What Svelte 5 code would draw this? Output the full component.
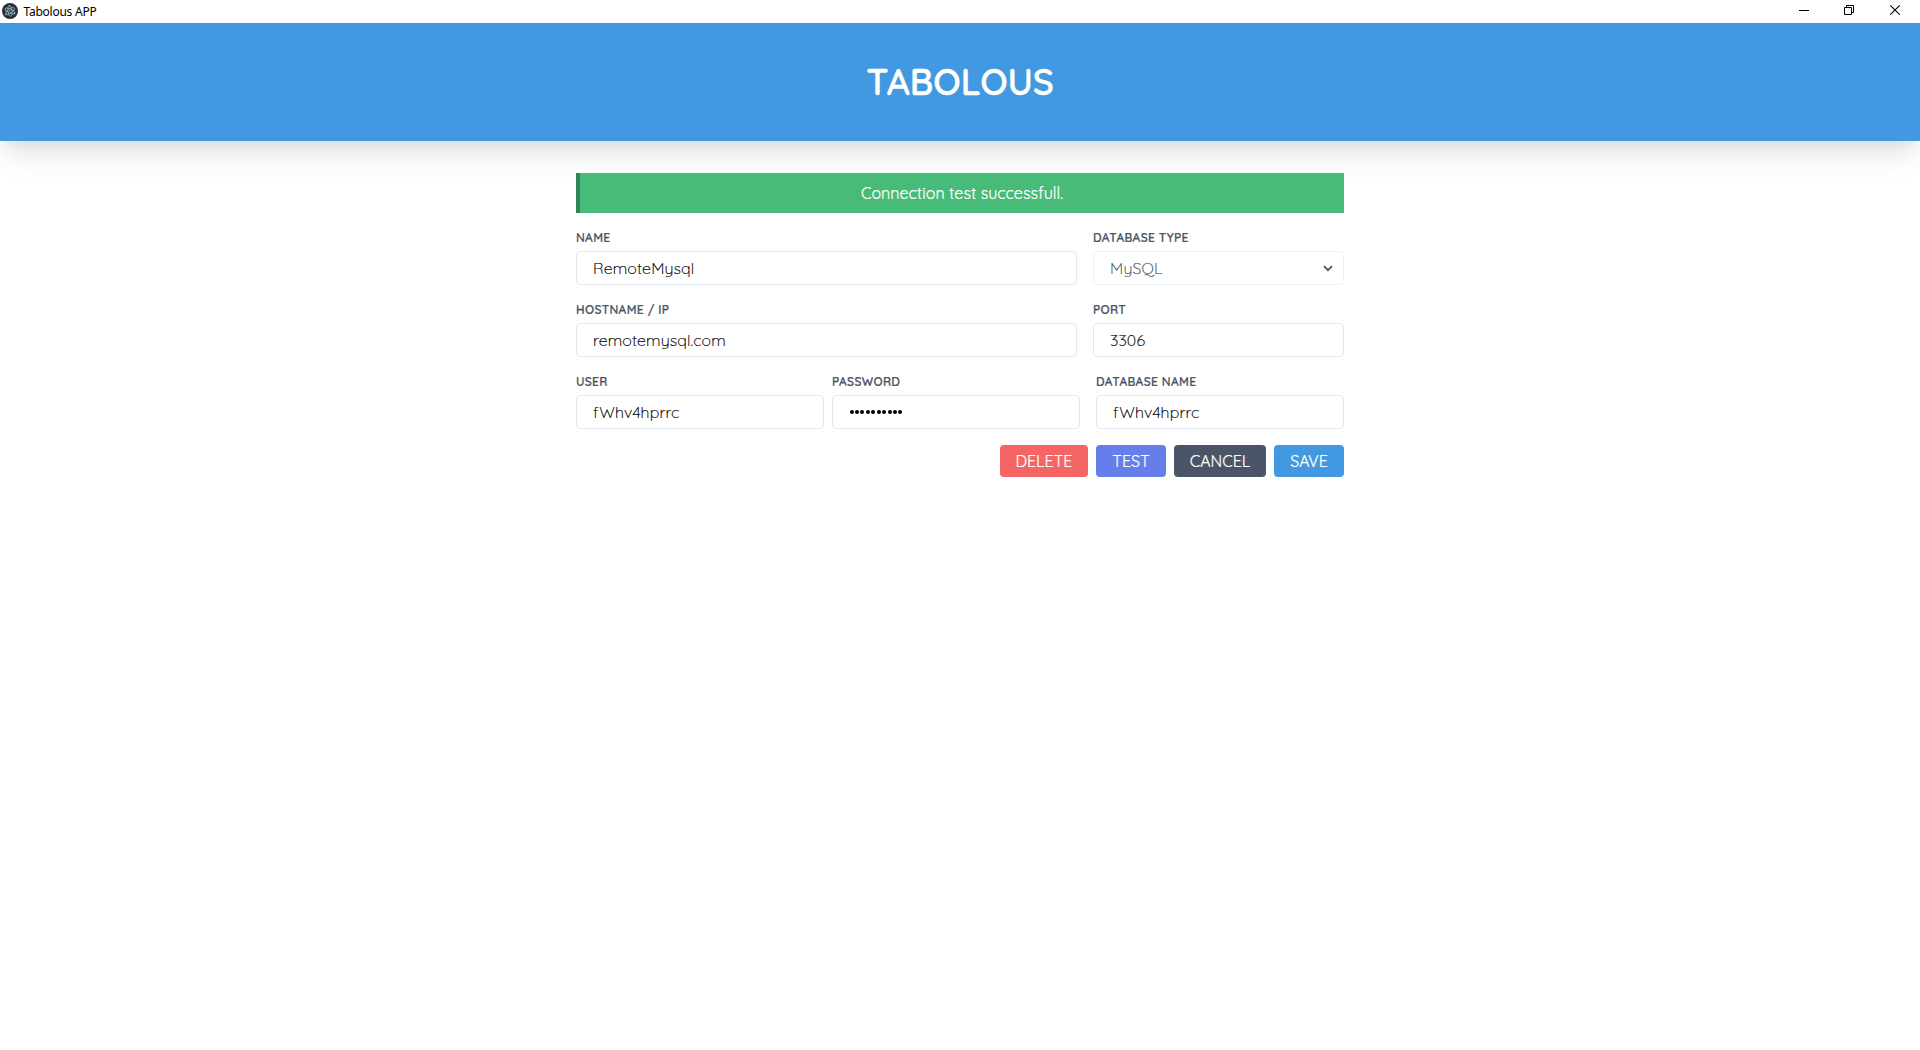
<script>
  const rows = [
    [
      { id: 'name', label: 'Name', value: 'RemoteMysql', size: 'wide' },
      { id: 'type', label: 'Database type', value: 'MySQL', size: 'narrow', select: true }
    ],
    [
      { id: 'host', label: 'Hostname / IP', value: 'remotemysql.com', size: 'wide' },
      { id: 'port', label: 'Port', value: '3306', size: 'narrow' }
    ],
    [
      { id: 'user', label: 'User', value: 'fWhv4hprrc', size: 'third' },
      { id: 'password', label: 'Password', dots: 10, size: 'third' },
      { id: 'dbname', label: 'Database name', value: 'fWhv4hprrc', size: 'third' }
    ]
  ];
  const buttons = ['Delete', 'Test', 'Cancel', 'Save'];
</script>

<div class="window">
  <div class="titlebar">
    <svg class="logo" width="16" height="16" viewBox="0 0 16 16">
      <circle cx="8" cy="8" r="8" fill="#2b2e3a" />
      <g fill="none" stroke="#8fb4bf" stroke-width=".8">
        <ellipse cx="8" cy="8" rx="5.3" ry="2.1" transform="rotate(25 8 8)" />
        <ellipse cx="8" cy="8" rx="5.3" ry="2.1" transform="rotate(85 8 8)" />
        <ellipse cx="8" cy="8" rx="5.3" ry="2.1" transform="rotate(145 8 8)" />
      </g>
      <g fill="#9fc5cf">
        <circle cx="8" cy="8" r=".7" />
        <circle cx="4.1" cy="11.5" r=".8" />
        <circle cx="12.6" cy="10.3" r=".8" />
        <circle cx="7.4" cy="2.8" r=".7" />
      </g>
    </svg>
    <span class="app-name">Tabolous APP</span>
    <div class="controls">
      <svg width="46" height="22" viewBox="0 0 46 22"><path d="M18 10.5h10" /></svg>
      <svg width="46" height="22" viewBox="0 0 46 22"><path d="M17.5 7.5h7v7h-7zM19.5 7.5v-2h7v7h-2" /></svg>
      <svg width="46" height="22" viewBox="0 0 46 22"><path class="cross" d="M17.3 5.3l9.4 9.4M26.7 5.3l-9.4 9.4" /></svg>
    </div>
  </div>

  <header><h1>TABOLOUS</h1></header>

  <main>
    <div class="alert">Connection test successfull.</div>
    {#each rows as row}
      <div class="row">
        {#each row as field}
          <div class="field {field.size} {field.id}">
            <span class="label">{field.label}</span>
            <div class="control" class:disabled={field.select}>
              {#if field.dots}
                <span class="dots">{#each Array(field.dots) as _}<i></i>{/each}</span>
              {:else}
                <span class="value">{field.value}</span>
              {/if}
              {#if field.select}
                <svg class="chevron" width="10" height="7" viewBox="0 0 10 7"><path d="M1 1.2l4 4 4-4" /></svg>
              {/if}
            </div>
          </div>
        {/each}
      </div>
    {/each}
    <div class="actions">
      {#each buttons as b}
        <button class={b.toLowerCase()}>{b}</button>
      {/each}
    </div>
  </main>
</div>

<style>
  :global(body) { background: #fff; }
  .window { min-height: 1050px; font-family: Quicksand, Lato, sans-serif; font-size: 16px; line-height: 24px; }
  .titlebar { height: 23px; display: flex; align-items: flex-start; background: #fff; }
  .logo { margin: 3px 5px 0 2px; flex: none; }
  .app-name { font: 12px/16px "Segoe UI", "Noto Sans", sans-serif; letter-spacing: -0.25px; color: #000; margin: 4px 0 0 .5px; }
  .controls { display: flex; margin-left: auto; margin-right: 1px; }
  .controls svg { display: block; fill: none; stroke: #000; stroke-width: 1; }
  .controls .cross { stroke-width: 1.1; }
  header { height: 118px; display: flex; align-items: center; justify-content: center; background: #4299e1; box-shadow: 0 20px 25px -5px rgba(0, 0, 0, .1), 0 10px 10px -5px rgba(0, 0, 0, .04); }
  h1 { margin: 0; font-size: 36px; line-height: 48px; font-weight: 600; color: #fff; -webkit-text-stroke: .4px #fff; }
  main { width: 768px; margin: 32px auto 0; }
  .alert { box-sizing: border-box; height: 40px; padding: 8px; border-left: 4px solid #2f855a; background: #48bb78; color: #fff; text-align: center; -webkit-text-stroke: .2px #fff; }
  .row { display: flex; justify-content: space-between; height: 56px; margin-top: 16px; }
  .field { display: flex; flex-direction: column; }
  .wide { width: 501px; }
  .narrow { width: 251px; }
  .third { width: 248px; }
  .password { margin-right: 8px; }
  .label { height: 22px; line-height: 18px; font-size: 12px; font-weight: 600; color: #4a5568; text-transform: uppercase; white-space: nowrap; letter-spacing: .32px; -webkit-text-stroke: .2px #4a5568; }
  .control { box-sizing: border-box; height: 34px; padding: 0 10px 0 16px; display: flex; align-items: center; border: 1px solid #e2e8f0; border-radius: 4px; color: #000; background: #fff; }
  .value { font-weight: 300; letter-spacing: .12px; -webkit-text-stroke: .2px currentColor; }
  .disabled { color: #4a5568; border-color: #edf2f7; }
  .dots { display: flex; gap: 1.45px; padding-left: .5px; }
  .dots i { width: 4px; height: 4px; border-radius: 50%; background: #000; }
  .chevron { margin-left: auto; fill: none; stroke: #4a5568; stroke-width: 1.8; }
  .actions { display: flex; justify-content: flex-end; gap: 8px; margin-top: 16px; }
  button { height: 32px; padding: 0; border: 0; border-radius: 4px; font: inherit; color: #fff; text-transform: uppercase; -webkit-text-stroke: .2px #fff; }
  .delete { width: 88px; background: #f56565; }
  .test { width: 70px; background: #667eea; }
  .cancel { width: 92px; background: #4a5568; }
  .save { width: 70px; background: #4299e1; }
</style>
